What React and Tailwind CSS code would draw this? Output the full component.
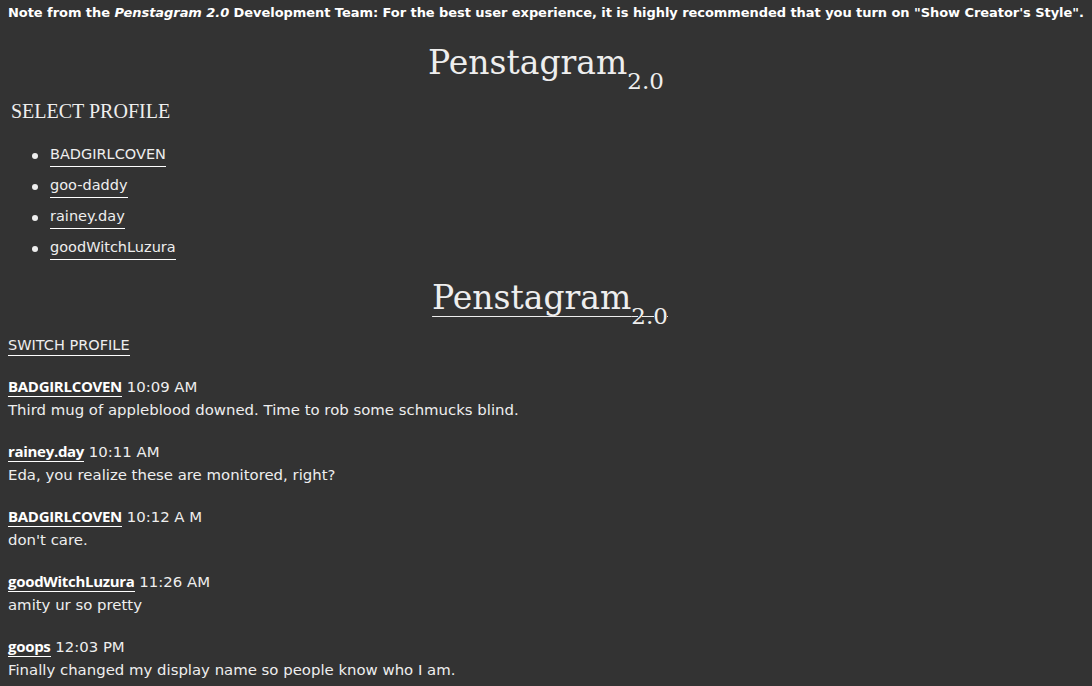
export default function App() {
  const users = ["BADGIRLCOVEN", "goo-daddy", "rainey.day", "goodWitchLuzura"];
  const posts = [
    ["BADGIRLCOVEN", "10:09 AM", "Third mug of appleblood downed. Time to rob some schmucks blind."],
    ["rainey.day", "10:11 AM", "Eda, you realize these are monitored, right?"],
    ["BADGIRLCOVEN", "10:12 A M", "don't care."],
    ["goodWitchLuzura", "11:26 AM", "amity ur so pretty"],
    ["goops", "12:03 PM", "Finally changed my display name so people know who I am."],
  ];
  return (
    <div className="min-h-[686px] w-[1092px] overflow-hidden bg-[#333333] text-[#eeeeee] font-['DejaVu_Sans',sans-serif]">
      <p className="px-2 pt-[4px] text-[13px] leading-[18px] font-bold tracking-[-0.06px] whitespace-nowrap text-white">
        Note from the <i>Penstagram 2.0</i> Development Team: For the best user experience, it is highly recommended that you turn on "Show Creator's Style".
      </p>
      <h1 className="mt-[21px] h-[40px] text-center font-['DejaVu_Serif',serif] text-[33px] leading-[40px] font-normal">
        Penstagram<sub className="static text-[23px] leading-none align-[-15px]">2.0</sub>
      </h1>
      <h2 className="mt-[16px] ml-[11px] font-['Liberation_Serif',serif] text-[20px] leading-[24px]">SELECT PROFILE</h2>
      <ul className="mt-[21px] ml-[32px] flex flex-col gap-[8px] text-[14.5px]">
        {users.map((u) => (
          <li key={u} className="flex items-center">
            <span className="w-[6px] h-[6px] rounded-full bg-[#eeeeee] mr-[12px] mt-[1px]"></span>
            <span className="leading-[20px] border-b border-white pb-[2px]">{u}</span>
          </li>
        ))}
      </ul>
      <h1 className="mt-[18px] h-[40px] text-center font-['DejaVu_Serif',serif] text-[33px] leading-[40px] font-normal underline decoration-1 underline-offset-[7px] pl-[8px]">
        Penstagram<sub className="static text-[23px] leading-none align-[-15px]">2.0</sub>
      </h1>
      <div className="mt-[16px] ml-[8px] text-[14.5px] leading-[22px]">
        <span className="border-b border-white pb-[2px]">SWITCH PROFILE</span>
      </div>
      <div className="mt-[20px] ml-[8px] flex flex-col gap-[19px] text-[14.9px] leading-[23px]">
        {posts.map(([n, t, m], i) => (
          <div key={i}>
            <div>
              <span className="font-['Open_Sans',sans-serif] font-bold text-[15px] leading-[14px] text-white border-b border-white pb-[0px] tracking-[-0.3px]">{n}</span> {t}
            </div>
            <div>{m}</div>
          </div>
        ))}
      </div>
    </div>
  );
}
